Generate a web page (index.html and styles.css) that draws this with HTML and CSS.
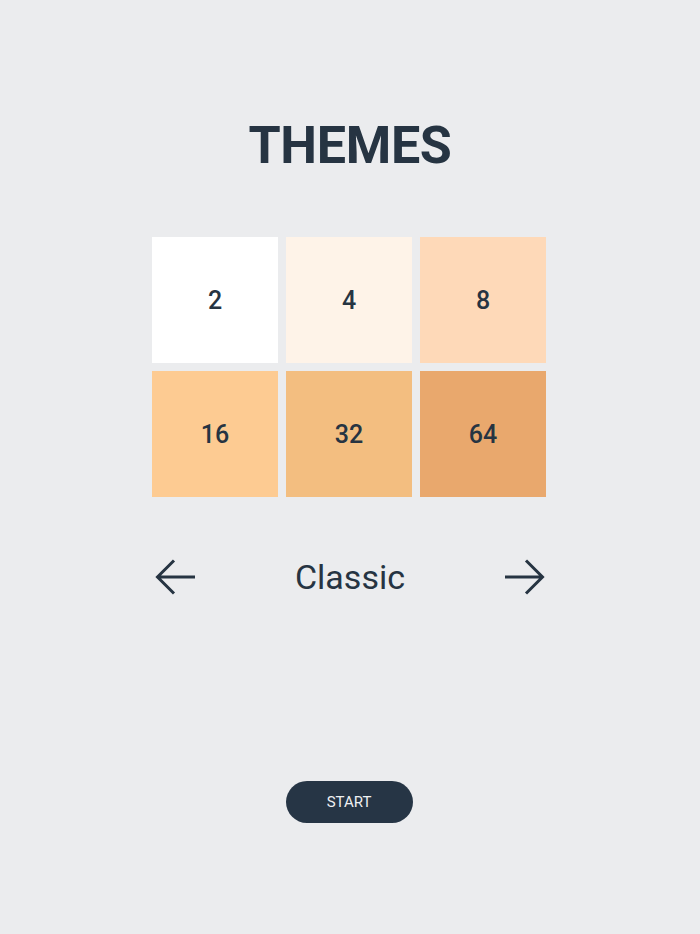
FILE: index.html
```html
<!DOCTYPE html>
<html lang="en">
<head>
<meta charset="utf-8">
<title>Themes</title>
<link rel="stylesheet" href="styles.css">
</head>
<body>
<main class="screen">
  <h1 class="title">THEMES</h1>
  <div class="board">
    <div class="tile t2">2</div>
    <div class="tile t4">4</div>
    <div class="tile t8">8</div>
    <div class="tile t16">16</div>
    <div class="tile t32">32</div>
    <div class="tile t64">64</div>
  </div>
  <div class="picker">
    <button class="arrow" aria-label="Previous theme">
      <svg viewBox="0 0 40 36" width="40" height="36"><path d="M40 18H2.5M19 1.5L2.5 18 19 34.5" fill="none" stroke="#263442" stroke-width="3"/></svg>
    </button>
    <span class="theme-name">Classic</span>
    <button class="arrow" aria-label="Next theme">
      <svg viewBox="0 0 40 36" width="40" height="36"><path d="M0 18h37.5M21 1.5L37.5 18 21 34.5" fill="none" stroke="#263442" stroke-width="3"/></svg>
    </button>
  </div>
  <button class="start">START</button>
</main>
</body>
</html>
```
FILE: styles.css
```css
html, body {
  margin: 0;
  padding: 0;
  background: #ebecee;
}
.screen {
  width: 700px;
  height: 934px;
  display: flex;
  flex-direction: column;
  align-items: center;
  font-family: Roboto, "Noto Sans", sans-serif;
  color: #263442;
  padding-top: 118px;
  padding-right: 2px;
  box-sizing: border-box;
}
.title {
  margin: 0 0 0 2px;
  font-size: 52px;
  line-height: 56px;
  font-weight: 700;
  letter-spacing: -0.3px;
}
.board {
  margin-top: 63px;
  display: grid;
  grid-template-columns: repeat(3, 126px);
  grid-auto-rows: 126px;
  gap: 8px;
}
.tile {
  display: flex;
  align-items: center;
  justify-content: center;
  font-size: 25px;
  font-weight: 500;
}
.t2 { background: #ffffff; }
.t4 { background: #fef3e8; }
.t8 { background: #fed9b8; }
.t16 { background: #fdcb92; }
.t32 { background: #f3be80; }
.t64 { background: #e9a86d; }
.picker {
  margin-top: 60px;
  margin-left: 2px;
  width: 390px;
  height: 40px;
  display: flex;
  align-items: center;
  justify-content: space-between;
}
.arrow {
  background: none;
  border: 0;
  padding: 0;
  width: 40px;
  height: 36px;
  display: flex;
}
.theme-name {
  font-size: 34px;
  font-weight: 400;
}
.start {
  margin-top: 184px;
  width: 127px;
  height: 42px;
  border: 0;
  border-radius: 21px;
  background: #263545;
  color: #eef0f2;
  font-family: Roboto, "Noto Sans", sans-serif;
  font-size: 15px;
  font-weight: 400;
}
```
